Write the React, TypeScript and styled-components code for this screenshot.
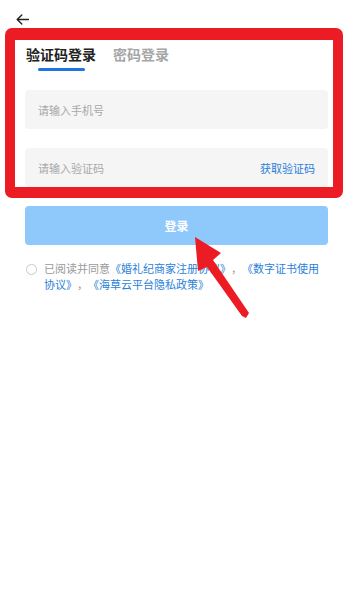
import React from "react";
import styled, { createGlobalStyle } from "styled-components";

const GlobalStyle = createGlobalStyle`
  html, body { margin: 0; padding: 0; background: #ffffff; }
  body { font-family: "Noto Sans CJK SC", "Noto Sans", sans-serif; text-spacing-trim: space-all; }
  * { box-sizing: border-box; }
`;

const Page = styled.div`
  position: relative;
  width: 353px;
  height: 600px;
  overflow: hidden;
  background: #ffffff;
`;

const Header = styled.div`
  height: 28px;
  padding: 14px 0 0 16px;
  svg { display: block; }
`;

const Frame = styled.div`
  margin: 0 10px 0 5px;
  border-style: solid;
  border-color: #ec1c24;
  border-width: 12px 10px 11px 10px;
  border-radius: 7px;
  padding: 0 5px 0 10px;
`;

const Tabs = styled.div`
  display: flex;
  gap: 17px;
  padding: 4px 0 0 1px;
`;

const Tab = styled.div<{ $active?: boolean }>`
  display: flex;
  flex-direction: column;
  align-items: center;
  font-size: 14px;
  line-height: 20px;
  font-weight: 700;
  color: ${(p) => (p.$active ? "#222222" : "#a6a6a6")};
`;

const Underline = styled.div<{ $active?: boolean }>`
  width: 47px;
  height: 3px;
  margin-top: 4px;
  border-radius: 2px;
  background: ${(p) => (p.$active ? "#1f76e0" : "transparent")};
`;

const Field = styled.div`
  display: flex;
  align-items: center;
  height: 39px;
  margin-top: 19px;
  padding: 0 13px;
  background: #f5f5f5;
  border-radius: 4px;
`;

const Input = styled.input`
  flex: 1;
  min-width: 0;
  border: none;
  outline: none;
  background: transparent;
  padding: 0;
  font-family: "Noto Sans CJK SC", "Noto Sans", sans-serif;
  font-size: 11px;
  color: #333;
  &::placeholder { color: #a8a8a8; }
`;

const CodeLink = styled.span`
  font-size: 11px;
  color: #2a7fd9;
`;

const LoginButton = styled.button`
  display: block;
  width: 303px;
  height: 39px;
  margin: 8px 25px 0 25px;
  border: none;
  border-radius: 4px;
  background: #8fc8fb;
  color: #ffffff;
  font-family: "Noto Sans CJK SC", "Noto Sans", sans-serif;
  font-size: 12px;
  font-weight: 700;
`;

const Agreement = styled.div`
  display: flex;
  align-items: flex-start;
  gap: 7px;
  margin: 16px 30px 0 26px;
`;

const Circle = styled.span`
  flex: none;
  width: 11px;
  height: 11px;
  margin-top: 2.5px;
  border: 1px solid #c8c8c8;
  border-radius: 50%;
`;

const AgreeText = styled.p`
  margin: 0;
  font-size: 11px;
  line-height: 15.5px;
  color: #9a9a9a;
  text-spacing-trim: space-all;
`;

const Link = styled.span`
  color: #2a7fd9;
`;

const Overlay = styled.svg`
  position: absolute;
  left: 0;
  top: 0;
  pointer-events: none;
`;

export default function App() {
  return (
    <Page>
      <GlobalStyle />
      <Header>
        <svg width="13" height="11" viewBox="0 0 13 11" fill="none">
          <path d="M12.5 5.5H1.2M5.8 1L1.2 5.5L5.8 10" stroke="#222" strokeWidth="1.4" strokeLinecap="round" strokeLinejoin="round" />
        </svg>
      </Header>
      <Frame>
        <Tabs>
          <Tab $active>
            验证码登录
            <Underline $active />
          </Tab>
          <Tab>
            密码登录
            <Underline />
          </Tab>
        </Tabs>
        <Field>
          <Input placeholder="请输入手机号" />
        </Field>
        <Field>
          <Input placeholder="请输入验证码" />
          <CodeLink>获取验证码</CodeLink>
        </Field>
      </Frame>
      <LoginButton>登录</LoginButton>
      <Agreement>
        <Circle />
        <AgreeText>
          已阅读并同意<Link>《婚礼纪商家注册协议》</Link>，<Link>《数字证书使用协议》</Link>，<Link>《海草云平台隐私政策》</Link>
        </AgreeText>
      </Agreement>
      <Overlay width="353" height="600" viewBox="0 0 353 600">
        <polygon
          points="195,237 221,253 213,260 249,313 246,318 242,316 207,267 198,271"
          fill="#ec1c24"
        />
      </Overlay>
    </Page>
  );
}
